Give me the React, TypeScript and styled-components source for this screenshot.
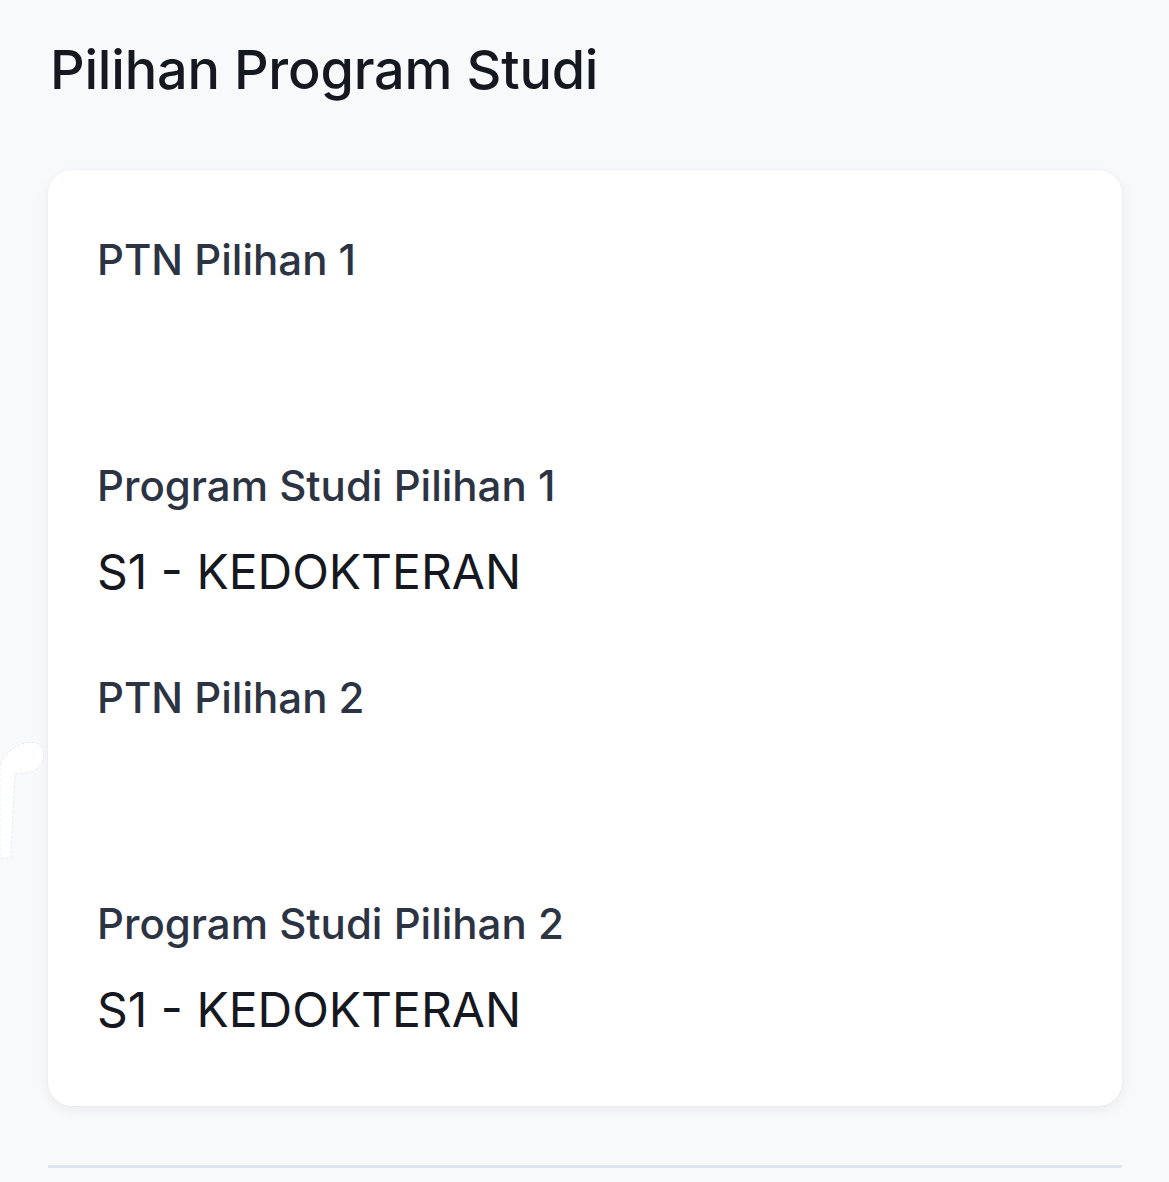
import styled, { createGlobalStyle } from 'styled-components'

const GlobalStyle = createGlobalStyle`
    html, body {
        margin: 0;
        padding: 0;
        background: #f8f9fa;
    }
    body {
        font-family: Inter, "Noto Sans", "Liberation Sans", sans-serif;
        -webkit-font-smoothing: antialiased;
    }
`

type Field = {
    label: string
    value?: string
}

const fields: Field[] = [
    { label: 'PTN Pilihan 1' },
    { label: 'Program Studi Pilihan 1', value: 'S1 - KEDOKTERAN' },
    { label: 'PTN Pilihan 2' },
    { label: 'Program Studi Pilihan 2', value: 'S1 - KEDOKTERAN' },
]

export default function App() {
    return (
        <>
            <GlobalStyle />
            <Page>
                <Title>Pilihan Program Studi</Title>
                <Card>
                    {fields.map((f, i) => (
                        <FieldBlock key={i}>
                            <Label>{f.label}</Label>
                            {/* redacted values are left blank */}
                            <Value $blank={!f.value}>{f.value ?? '\u00a0'}</Value>
                        </FieldBlock>
                    ))}
                </Card>
                <Divider />
                {/* white redaction scribble spilling past the card edge */}
                <Scribble width="46" height="132" viewBox="0 0 46 132">
                    <path
                        d="M0 34 C8 18 24 10 36 13 C45 16 46 30 38 38 C33 42 28 43 24 43 L15 44 L13 80 L11 128 L0 128 Z"
                        fill="#ffffff"
                        stroke="#d9dbe0"
                        strokeWidth="0.6"
                        strokeDasharray="3 2"
                    />
                </Scribble>
            </Page>
        </>
    )
}

/* ===========================
   styled-components
   =========================== */

const Page = styled.main`
    position: relative;
    min-height: 1182px;
    box-sizing: border-box;
    padding: 38px 47px 0 48px;
    display: flex;
    flex-direction: column;
`

const Title = styled.h1`
    margin: 0 0 0 2px;
    font-size: 54px;
    font-weight: 500;
    line-height: 64px;
    color: #161821;
    letter-spacing: -0.2px;
`

const Card = styled.section`
    margin-top: 68px;
    background: #ffffff;
    border-radius: 24px;
    box-shadow: 0 4px 14px rgba(20, 24, 40, 0.06), 0 0 2px rgba(20, 24, 40, 0.05);
    padding: 64px 49px 67px;
    display: flex;
    flex-direction: column;
    gap: 71px;
`

const FieldBlock = styled.div`
    display: flex;
    flex-direction: column;
    gap: 31px;
`

const Label = styled.div`
    font-size: 42px;
    font-weight: 500;
    line-height: 52px;
    color: #2c3444;
`

const Value = styled.div<{ $blank?: boolean }>`
    font-size: 48px;
    font-weight: 400;
    line-height: 58px;
    height: ${p => (p.$blank ? '72px' : '58px')};
    color: #161821;
`

const Divider = styled.hr`
    margin: 59px 0 0;
    border: none;
    height: 3px;
    background: #e2e5ef;
`

const Scribble = styled.svg`
    position: absolute;
    left: 0;
    top: 730px;
    pointer-events: none;
`
